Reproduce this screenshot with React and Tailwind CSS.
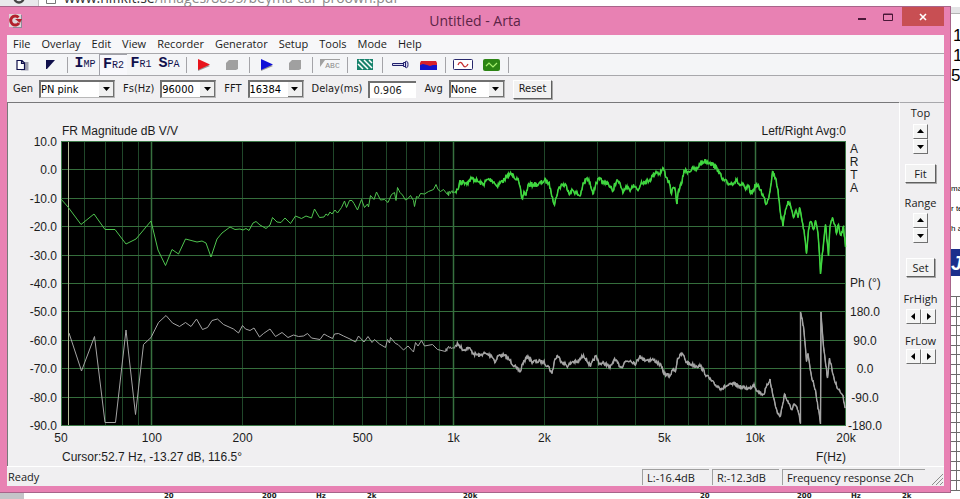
import { useState } from 'react'

const MENUS = ['File', 'Overlay', 'Edit', 'View', 'Recorder', 'Generator', 'Setup', 'Tools', 'Mode', 'Help']

// plot area of the chart, in svg units
const PLOT = { left: 61, right: 846, top: 141, bottom: 425 }

// magnitude trace: x,y pairs
const MAGNITUDE = `61,199 68,207 81,224.5 94,214 105,229.5 115,229.5 126,244 136,239 151,221 158,250 165.5,265.5
172,249.5 178.5,254 185.5,239 197,242 202,241 206,243 211,257 217,239 222,233 230,227 235,229.5 240,229 243,230
246,228.5 249,230.5 253,223 256,221.5 260,225 266,228.5 270,225 272.5,217.5 277,222 281,222.5 285,218 290.5,223.5
295.5,216 301.5,218.5 306,216 311.5,218 314.5,209 319.5,217.5 324,217 326,214 328,215.5 330,212 332,214 335,210
337.5,213 341.5,207.5 344.5,201 346.5,207.5 349.5,200.5 352,200.5 354,203.5 357.5,210 361.5,199.5 364.5,207.5
367.5,204 368.5,207 370.5,195.5 374,199.5 376.5,192 380.5,200 384.5,199.5 388,202.5 391.5,194.5 394.5,192.5
396,200.5 397.5,187.5 400,192.5 402.5,195 405.5,200 408,198.5 410.5,195.5 413.5,200.5 414.5,206.5 416.5,196.5
418.5,197.5 420.5,193.5 424.5,194 428.5,191.5 433.5,189.5 436,184.5 438,189.5 440.5,191.5 443.5,189.5 447.5,194.5
451.5,191.5 455.5,191.5 458,189.5 459.5,182.5 463.5,182 467.5,182.5 471.5,178.5 475.5,180 479.5,182.5 483.5,184
487.5,179.5 491.5,180 494,182 496.5,186 500.5,182.5 504.5,179.5 510,174 513.5,175.5 517.5,179.5 519.5,185
521.5,197 522.5,199 524,191.5 526,195 528,185 533.5,184.5 538.5,184.5 544.5,180.5 548.5,182.5 550.5,188.5
552.5,197 554.5,205 556,198 558,190 562,184 566.5,186 570,194 572.5,190 580,196 582.5,186.5 586.5,178.5
590,182.5 593.5,193.5 596,182.5 599.5,179.5 604,183.5 607.5,182 612.5,191.5 615,183.5 618,181 623.5,192
626.5,188 629.5,190 633.5,184.5 638,190.5 641.5,181.5 645.5,182 650,179.5 656,171.5 659.5,173.5 663.5,168.5
666.5,177.5 669.5,183.5 671.5,194 673.5,187.5 675.5,191.5 677,204 678.5,190 682,182.5 684,170.5 688.5,171.5
693.5,168.5 696.5,170 700,163.5 704.5,161 710,162.5 714.5,166 718.5,170.5 722.5,180 729.5,184 736.5,180.5
740,185.5 742.5,184.5 745.5,189.5 748,186.5 751.5,193.5 756,184.5 760.5,189.5 766.5,204 769.5,193.5 772.5,171.5
775.5,178 778,190 780.5,213.5 783,226 785.5,209.5 788,201 790.5,205.5 793.5,217.5 796,210 798,217.5 799.5,207.5
801.5,217.5 804,230 806.5,253.5 808.5,230 810.5,221.5 813.5,229.5 815.5,220.5 818,233.5 820.5,274 823.5,243.5
825.5,224.5 828.5,256 830,226.5 832.5,217.5 835.5,226.5 836.5,233.5 838.5,224.5 840.5,235 843.5,226.5 845.5,247`

// phase trace, it wraps twice near the right end
const PHASE = `69,333 81.5,371 94.5,336.5 105,422.5 115.5,422.5 126,330 135.5,414.5 143.5,344.5 151,337.5 158.5,322.5
166,315.5 172.5,323 179.5,326.5 185.5,322.5 191,326.5 196.5,319 202.5,329.5 207.5,327.5 212,320.5 217.5,319
223.5,324.5 233.5,329 238.5,333 242.5,325.5 245.5,329 250,330.5 254,328 259.5,337 263.5,333.5 270,329 275.5,336.5
282,332.5 288,337.5 293.5,335 298.5,336.5 303.5,336 307.5,333.5 311.5,338 320,339.5 324,334 327.5,336 332.5,338.5
334.5,334 338.5,333.5 343.5,336 350,339 355.5,342 358.5,336 364,342 368,336.5 372,342.5 374.5,339.5 379.5,344
385.5,347.5 387.5,339.5 389.5,343 390.5,337.5 395.5,343.5 398,344.5 403.5,350 408,346 413.5,352 415.5,342.5
418,346 421.5,340.5 424.5,346 432.5,344.5 437.5,349.5 445.5,351.5 448,347.5 454,347.5 458,344 463.5,350
468.5,347.5 474,354 480,355.5 483.5,353.5 491.5,355.5 495.5,362 498,355.5 504.5,355.5 510,360.5 516.5,368.5
520.5,371.5 522.5,363.5 528,356 531.5,361.5 540.5,361.5 543.5,362 548.5,366.5 552,373.5 554.5,360.5 557.5,355.5
561.5,361.5 568,366 572.5,361.5 577.5,362.5 583.5,355 590.5,366.5 595.5,356 599.5,363.5 605.5,363.5 610,368
614,359.5 621.5,367.5 624.5,362 630.5,360.5 636,363.5 640,355.5 642.5,359.5 654,360 660,364.5 664.5,374 670,376
673.5,368 675.5,371.5 677.5,358.5 682.5,353.5 686.5,362.5 692,364.5 696.5,366 700.5,366 706.5,375.5 714.5,384.5
721.5,388.5 728,385.5 734.5,384 741.5,387.5 750,388.5 754,384 757.5,391.5 763.5,394.5 770,379 772.5,393.5
777.5,413.5 780.5,416 784.5,394 788.5,403.5 791.5,409.5 794,404 798,410.5 800.5,423.5 800.5,312 803.5,326.5
806.5,361.5 808,353.5 811.5,376.5 815.5,390 820.5,424 821,312 823.5,346.5 827.5,378 829.5,358 832,370
835.5,383.5 840,391.5 842.5,395 845.5,408`

// FFT bins get dense on the log axis, so the trace turns noisy after `from`
const makeTrace = (text, from, amount) => {
  const pts = text.trim().split(/\s+/).map(p => p.split(',').map(Number))
  let seed = 7
  const rand = () => {
    seed = (seed * 16807) % 2147483647
    return seed / 2147483647 - 0.5
  }
  const out = []
  pts.forEach(([x, y], i) => {
    out.push([x, y])
    const next = pts[i + 1]
    if (!next || x < from || next[0] - x < 1) return
    const steps = Math.round((next[0] - x) / 0.6)
    for (let s = 1; s < steps; s++) {
      const t = s / steps
      out.push([x + (next[0] - x) * t, y + (next[1] - y) * t + rand() * amount])
    }
  })
  return out
}

const toPoints = pts => pts.map(([x, y]) => `${x.toFixed(1)},${y.toFixed(1)}`).join(' ')

const magnitude = makeTrace(MAGNITUDE, 445, 5)
const phase = makeTrace(PHASE, 445, 4)
const isDense = ([x]) => x >= 455

const freqToX = f =>
  PLOT.left + (PLOT.right - PLOT.left) * Math.log10(f / 50) / Math.log10(400)

const GRID_FREQS = [60, 70, 80, 90, 100, 200, 300, 400, 500, 600, 700, 800, 900,
  1000, 2000, 3000, 4000, 5000, 6000, 7000, 8000, 9000, 10000]
const FREQ_LABELS = [[50, '50'], [100, '100'], [200, '200'], [500, '500'], [1000, '1k'],
  [2000, '2k'], [5000, '5k'], [10000, '10k'], [20000, '20k']]
const DB_LABELS = ['10.0', '0.0', '-10.0', '-20.0', '-30.0', '-40.0', '-50.0', '-60.0', '-70.0', '-80.0', '-90.0']
const PHASE_LABELS = ['180.0', '90.0', '0.0', '-90.0', '-180.0']

const rowY = i => Math.round(PLOT.top + i * 28.4) + 0.5

function Chart() {
  return (
    <svg viewBox="8 137 891 310" className="block w-full h-auto overflow-visible text-[12px]" fill="#1c1c1c"
      role="img" aria-label="Frequency response">
      <rect x="61" y="141" width="785" height="285" fill="#000" />
      {GRID_FREQS.map(f => {
        const x = Math.floor(freqToX(f)) + 0.5
        const decade = f === 100 || f === 1000 || f === 10000
        return <line key={f} x1={x} x2={x} y1="141" y2="425"
          stroke={decade ? '#37703f' : '#20472a'} strokeWidth={decade ? 1.5 : 1} />
      })}
      {DB_LABELS.map((label, i) => (
        <g key={label}>
          <line x1="61" x2="846" y1={rowY(i)} y2={rowY(i)} stroke="#356e3c" />
          <text x="57" y={rowY(i) + 4.5} textAnchor="end">{label}</text>
        </g>
      ))}
      <rect x="61.5" y="141.5" width="784" height="284" fill="none" stroke="#3c7a48" />

      {/* Cursor */}
      <line x1="68.5" x2="68.5" y1="142" y2="425" stroke="#b4bc96" />

      <g fill="none">
        <polyline points={toPoints(phase)} stroke="#a4a4a4" />
        <polyline points={toPoints(phase.filter(isDense))} stroke="#a4a4a4" strokeWidth="1.4" />
        <polyline points={toPoints(magnitude)} stroke="#4fc44f" />
        <polyline points={toPoints(magnitude.filter(isDense))} stroke="#3fd63f" strokeWidth="1.5" />
      </g>

      {FREQ_LABELS.map(([f, label]) => (
        <text key={label} x={freqToX(f)} y="442" textAnchor="middle">{label}</text>
      ))}
      {['A', 'R', 'T', 'A'].map((c, i) => (
        <text key={i} x="854" y={153 + i * 13} textAnchor="middle">{c}</text>
      ))}
      <text x="850" y="287">Ph (°)</text>
      {PHASE_LABELS.map((label, i) => (
        <text key={label} x="865" y={rowY(i + 6) + 4.5} textAnchor="middle">{label}</text>
      ))}
    </svg>
  )
}

function ToolButton({ label, active, children }) {
  return (
    <button aria-label={label}
      className={`w-7 h-full flex items-center justify-center ${
        active ? 'bg-[#f8f8fc] border-t border-l border-[#a0a0a8]' : ''
      }`}>
      {children}
    </button>
  )
}

function ModeButton({ first, rest, active }) {
  return (
    <ToolButton label={first + rest} active={active}>
      <span className="flex items-baseline font-['Liberation_Mono',monospace] text-[#10104c] leading-4">
        <b className="text-[15px]">{first}</b>
        <span className="text-[10px]">{rest}</span>
      </span>
    </ToolButton>
  )
}

function Sep() {
  return (
    <div className="w-[7px] h-4 flex justify-center">
      <div className="w-px bg-[#a4a4a8]" />
    </div>
  )
}

function Play({ color }) {
  return (
    <svg width="14" height="12" viewBox="0 0 14 12">
      <path d="M1 1v11l12-5z" fill="#999" />
      <path d="M1 0v11l12-5.5z" fill={color} />
    </svg>
  )
}

function Stop() {
  return (
    <svg width="12" height="12" viewBox="0 0 12 12">
      <path d="M3 1h9v9l-2 1H0V4z" fill="#a0a0a0" />
    </svg>
  )
}

function Combo({ label, options, width }) {
  const [value, setValue] = useState(options[0])
  return (
    <label className="flex items-center gap-[6px]">
      {label}
      <span className={`${width} h-[18px] flex bg-white border-t-2 border-l-2 border-b border-r border-t-[#707070] border-l-[#707070] border-[#b8b8b8]`}>
        <select value={value} onChange={e => setValue(e.target.value)}
          className="appearance-none bg-white flex-1 min-w-0 outline-none text-black">
          {options.map(o => <option key={o}>{o}</option>)}
        </select>
        <span className="w-[15px] bg-[#f0f0f0] border-r border-b border-[#707070] flex items-center justify-center pointer-events-none">
          <svg width="7" height="4" viewBox="0 0 7 4"><path d="M0 0h7L3.5 4z" fill="#000" /></svg>
        </span>
      </span>
    </label>
  )
}

const ARROWS = {
  up: 'M0 5h7L3.5 1z',
  down: 'M0 2h7L3.5 6z',
  left: 'M5 0v7L1 3.5z',
  right: 'M2 0v7l4-3.5z',
}

function ArrowButton({ dir, label }) {
  return (
    <button aria-label={label}
      className="w-[15px] h-[15px] bg-[#f4f4f4] border border-t-white border-l-white border-r-[#707070] border-b-[#707070] flex items-center justify-center">
      <svg width="7" height="7" viewBox="0 0 7 7"><path d={ARROWS[dir]} fill="#000" /></svg>
    </button>
  )
}

function PushButton({ children }) {
  return (
    <button className="h-[19px] px-[5px] text-[11px] leading-4 bg-[#f2f2f2] border border-t-white border-l-white border-r-[#606060] border-b-[#606060] shadow-[1px_1px_0_#a8a8a8]">
      {children}
    </button>
  )
}

function SidePanel() {
  return (
    <aside className="w-[45px] border-l border-l-white border-t border-t-[#a8a8ac] flex flex-col items-center text-[11px] leading-4 pt-[2px] pr-[3px]">
      <span>Top</span>
      <div className="flex flex-col mt-[3px]">
        <ArrowButton dir="up" label="Top up" />
        <ArrowButton dir="down" label="Top down" />
      </div>
      <div className="mt-[10px] mb-[12px]"><PushButton>&nbsp;Fit&nbsp;</PushButton></div>
      <span>Range</span>
      <div className="flex flex-col mt-[2px]">
        <ArrowButton dir="up" label="Range up" />
        <ArrowButton dir="down" label="Range down" />
      </div>
      <div className="mt-[15px] mb-[14px]"><PushButton>Set</PushButton></div>
      <span>FrHigh</span>
      <div className="flex mt-[2px] mb-[9px]">
        <ArrowButton dir="left" label="High frequency down" />
        <ArrowButton dir="right" label="High frequency up" />
      </div>
      <span>FrLow</span>
      <div className="flex">
        <ArrowButton dir="left" label="Low frequency down" />
        <ArrowButton dir="right" label="Low frequency up" />
      </div>
    </aside>
  )
}

function TitleBar() {
  return (
    <header className="h-7 grid grid-cols-[1fr_auto_1fr]">
      <div className="flex items-center pl-2">
        <svg width="15" height="15" viewBox="0 0 15 15">
          <path d="M2 1h12v13H5z" fill="#8d8a98" />
          <path d="M1 0h12v13H1z" fill="#ded6da" />
          <path d="M10.5 3.5A4.5 4.5 0 1 0 11 9" fill="none" stroke="#b3202c" strokeWidth="3" />
          <path d="M7 5h7l-2 4z" fill="#b3202c" />
        </svg>
      </div>
      <h1 className="self-center text-[14px] leading-5 text-[#5c2446]">Untitled - Arta</h1>
      <div className="flex justify-end items-start pr-[6px]">
        <button aria-label="Minimize" className="w-6 h-5 flex items-center justify-center">
          <svg width="8" height="10" viewBox="0 0 8 10"><path d="M0 6h8v2H0z" fill="#4a1838" /></svg>
        </button>
        <button aria-label="Maximize" className="w-7 h-5 flex items-center justify-center">
          <svg width="10" height="8" viewBox="0 0 10 8"><path d="M.5 1h9v6.500h-9zM0 1.500h10" fill="none" stroke="#4a1838" /></svg>
        </button>
        <button aria-label="Close" className="w-[42px] h-[19px] bg-[#c84f53] flex items-center justify-center">
          <svg width="8" height="8" viewBox="0 0 8 8"><path d="M1 1l6 6M7 1L1 7" stroke="#fff" strokeWidth="1.600" /></svg>
        </button>
      </div>
    </header>
  )
}

function Toolbar() {
  return (
    <div className="h-[22px] pl-px flex items-center border-b border-[#a8a8ac] bg-[#f4f5f7]">
      <ToolButton label="New">
        <svg width="13" height="12" viewBox="0 0 13 12">
          <path d="M5 3h7.500v8.500H5z" fill="#a0a0b0" />
          <path d="M1 1.500h5l2.500 2.500v6.500H1zM5.500 1.500v3h3" fill="#fff" stroke="#10104c" strokeWidth="1.200" />
        </svg>
      </ToolButton>
      <ToolButton label="Overlay">
        <svg width="9" height="9" viewBox="0 0 9 9"><path d="M0 0h9L1 9H0z" fill="#10104c" /></svg>
      </ToolButton>
      <Sep />
      <ModeButton first="I" rest="MP" />
      <ModeButton first="F" rest="R2" active />
      <ModeButton first="F" rest="R1" />
      <ModeButton first="S" rest="PA" />
      <Sep />
      <ToolButton label="Record"><Play color="#e8141c" /></ToolButton>
      <ToolButton label="Stop recording"><Stop /></ToolButton>
      <Sep />
      <ToolButton label="Generate"><Play color="#1010d8" /></ToolButton>
      <ToolButton label="Stop generator"><Stop /></ToolButton>
      <Sep />
      <ToolButton label="Overlay text">
        <span className="border-t border-[#a0a0a0] flex items-end h-[11px]">
          <svg width="5" height="10" viewBox="0 0 5 10"><path d="M0 0h5L0 7z" fill="#a0a0a0" /></svg>
          <span className="font-['Liberation_Mono',monospace] text-[8px] leading-[9px] text-[#8c8c8c]">ABC</span>
        </span>
      </ToolButton>
      <Sep />
      <ToolButton label="Grid">
        <svg width="16" height="11" viewBox="0 0 16 11">
          <rect width="16" height="11" fill="#17826c" />
          <path d="M1 5l5 5M2 1l9 9M7 1l8 8M12 1l3 3" stroke="#fff" strokeWidth="1.500" />
        </svg>
      </ToolButton>
      <Sep />
      <ToolButton label="Calibrate microphone">
        <svg width="17" height="9" viewBox="0 0 17 9">
          <path d="M.5 3.500h11v2H.5zM11.500 2.500h2v4h-2zM13.500 1.500q2.500-1 2.500 3t-2.500 3z" fill="#d8d8f0" stroke="#20206c" />
        </svg>
      </ToolButton>
      <ToolButton label="Spectrum">
        <svg width="17" height="10" viewBox="0 0 17 10">
          <path d="M1 1h15l1 2v3H0V3z" fill="#d8202c" />
          <path d="M0 5l3-1 4 1 3 1 3-1h4v5H0z" fill="#1414cc" />
        </svg>
      </ToolButton>
      <Sep />
      <ToolButton label="Generator setup">
        <svg width="20" height="11" viewBox="0 0 20 11">
          <rect x=".5" y=".5" width="19" height="10" rx="1" fill="#fff" stroke="#28286c" />
          <path d="M5 6c1.500-4 3.500-3 5 0s3.500 2 5-1" fill="none" stroke="#c83030" strokeWidth="1.300" />
        </svg>
      </ToolButton>
      <ToolButton label="Input scope">
        <svg width="17" height="12" viewBox="0 0 17 12">
          <rect width="17" height="12" rx="2" fill="#2c8414" />
          <path d="M3 7l3-3 4 4 4-4" fill="none" stroke="#a8f070" strokeWidth="1.200" />
        </svg>
      </ToolButton>
      <Sep />
    </div>
  )
}

function ArtaWindow() {
  const [delay, setDelay] = useState('0.906')
  return (
    <div className="flex-1 min-w-0 flex flex-col bg-[#e881b3] border-t border-r border-b border-[#a8648a]">
      <TitleBar />
      <div className="flex-1 flex flex-col ml-[7px] mr-[6px] mb-[6px] bg-[#f0eff1]">
        {/* Menu */}
        <nav className="h-[19px] pl-[6px] flex items-center gap-[11px] bg-[#f7f7f9] border-b border-[#a8a8ac] text-[11px] leading-4">
          {MENUS.map(m => <button key={m}>{m}</button>)}
        </nav>

        <Toolbar />

        {/* Settings */}
        <div className="h-[26px] pl-[6px] flex items-center gap-2 text-[11px] leading-4 font-['DejaVu_Sans_Condensed','DejaVu_Sans',sans-serif]">
          <Combo label="Gen" width="w-[76px]" options={['PN pink', 'PN white', 'Sweep']} />
          <Combo label="Fs(Hz)" width="w-[56px]" options={['96000', '48000', '44100']} />
          <Combo label="FFT" width="w-[56px]" options={['16384', '32768', '8192']} />
          <label className="flex items-center gap-[6px]">
            Delay(ms)
            <input value={delay} onChange={e => setDelay(e.target.value)}
              className="w-[48px] h-[17px] pl-[3px] bg-white border-t-2 border-l-2 border-[#707070] outline-none" />
          </label>
          <Combo label="Avg" width="w-[56px]" options={['None', 'Linear', 'Exp']} />
          <PushButton>Reset</PushButton>
        </div>

        <div className="flex-1 flex">
          <main className="flex-1 min-w-0 border-t border-l border-[#78787a] text-[12px] leading-4 text-[#1c1c1c] font-['Liberation_Sans',Arial,sans-serif]">
            <div className="pt-[22px] pl-[54px] pr-[53px] flex justify-between leading-3">
              <span>FR Magnitude dB V/V</span>
              <span>Left/Right Avg:0</span>
            </div>
            <Chart />
            <div className="pt-[2px] pl-[54px] pr-[53px] flex justify-between">
              <span>Cursor:52.7 Hz, -13.27 dB, 116.5°</span>
              <span>F(Hz)</span>
            </div>
          </main>
          <SidePanel />
        </div>

        {/* Status bar */}
        <footer className="h-5 border-t border-white flex items-center gap-[3px] text-[11px] leading-4">
          <span className="flex-1 pl-px">Ready</span>
          <span className="w-[67px] h-4 pl-1 border-t border-l border-[#a0a0a0]">L:-16.4dB</span>
          <span className="w-[67px] h-4 pl-1 border-t border-l border-[#a0a0a0]">R:-12.3dB</span>
          <span className="w-[143px] h-4 pl-1 border-t border-l border-[#a0a0a0]">Frequency response 2Ch</span>
          <svg width="16" height="14" viewBox="0 0 16 14" className="self-end">
            <path d="M4 13L15 2M8 13l7-7M12 13l3-3" stroke="#8c8c8c" />
          </svg>
        </footer>
      </div>
    </div>
  )
}

// part of the browser that shows above the window
function AddressStrip() {
  return (
    <div className="h-[6px] flex items-end overflow-hidden bg-[#e9e9ec] text-[14px] leading-4 font-['Open_Sans',sans-serif]">
      <div className="w-[38px] flex justify-center">
        <svg width="12" height="12" viewBox="0 0 12 12" className="mb-[2px]"><circle cx="6" cy="6" r="4.500" fill="none" stroke="#444" strokeWidth="2.500" /></svg>
      </div>
      <div className="flex-1 h-4 bg-white border-l border-[#c0c0c0] flex items-end gap-2 pl-[7px]">
        <svg width="10" height="14" viewBox="0 0 10 14" className="mb-[2px]"><path d="M.5.500h9v13h-9z" fill="#fff" stroke="#777" /></svg>
        <span className="text-[#8a8a8a]"><span className="text-[#333]">www.hifikit.se</span>/images/8855/beyma-car-proown.pdf</span>
      </div>
    </div>
  )
}

// part of the document that shows right of the window
function DocumentEdge() {
  return (
    <div className="w-[9px] overflow-hidden bg-white flex flex-col text-black font-['Liberation_Sans',Arial,sans-serif]">
      <div className="h-[7px] mt-px bg-[#e4e4e6] border-b border-[#b4b4b4]" />
      <div className="mt-[12px] text-[17px] leading-5">
        <p className="pl-[2px]">1</p>
        <p className="pl-[2px]">1</p>
        <p>5</p>
      </div>
      <div className="mt-[93px] text-[8px] leading-5 whitespace-nowrap">
        <p>ma</p>
        <p>r te</p>
        <p>h a</p>
      </div>
      <div className="mt-[10px] h-[27px] bg-[#1c2f8c] text-white font-bold italic text-[20px] leading-7">J</div>
      <svg width="9" height="195" viewBox="0 0 9 195" className="mt-[20px]">
        <path d="M5.500 0v195M0 .500h9M0 10.500h9M0 20.500h9M0 29.500h9M0 39.500h9M0 49.500h9M0 58.500h9M0 68.500h9M0 78.500h9M0 87.500h9M0 97.500h9M0 107.500h9M0 116.500h9M0 126.500h9M0 136.500h9M0 145.500h9M0 155.500h9M0 165.500h9M0 174.500h9M0 184.500h9M0 194.500h9" stroke="#6c6c6c" fill="none" />
      </svg>
    </div>
  )
}

// axis captions of the document that show under the window
function AxisStrip() {
  return (
    <div className="h-[6px] overflow-hidden flex bg-white">
      <div className="w-[24px] bg-[#c4c4c8]" />
      <div className="flex-1 grid grid-cols-[140fr_98fr_54fr_51fr_96fr_237fr_97fr_54fr_51fr_58fr] text-[7px] leading-[6px] font-bold text-[#222] font-['DejaVu_Sans',sans-serif]">
        <span />
        <span>20</span>
        <span>200</span>
        <span>Hz</span>
        <span>2k</span>
        <span>20k</span>
        <span>20</span>
        <span>200</span>
        <span>Hz</span>
        <span>2k</span>
      </div>
    </div>
  )
}

export default function App() {
  return (
    <div className="min-h-screen flex flex-col bg-white text-[#1a1a1a] font-['Open_Sans','Noto_Sans',sans-serif]">
      <AddressStrip />
      <div className="flex-1 flex">
        <ArtaWindow />
        <DocumentEdge />
      </div>
      <AxisStrip />
    </div>
  )
}
